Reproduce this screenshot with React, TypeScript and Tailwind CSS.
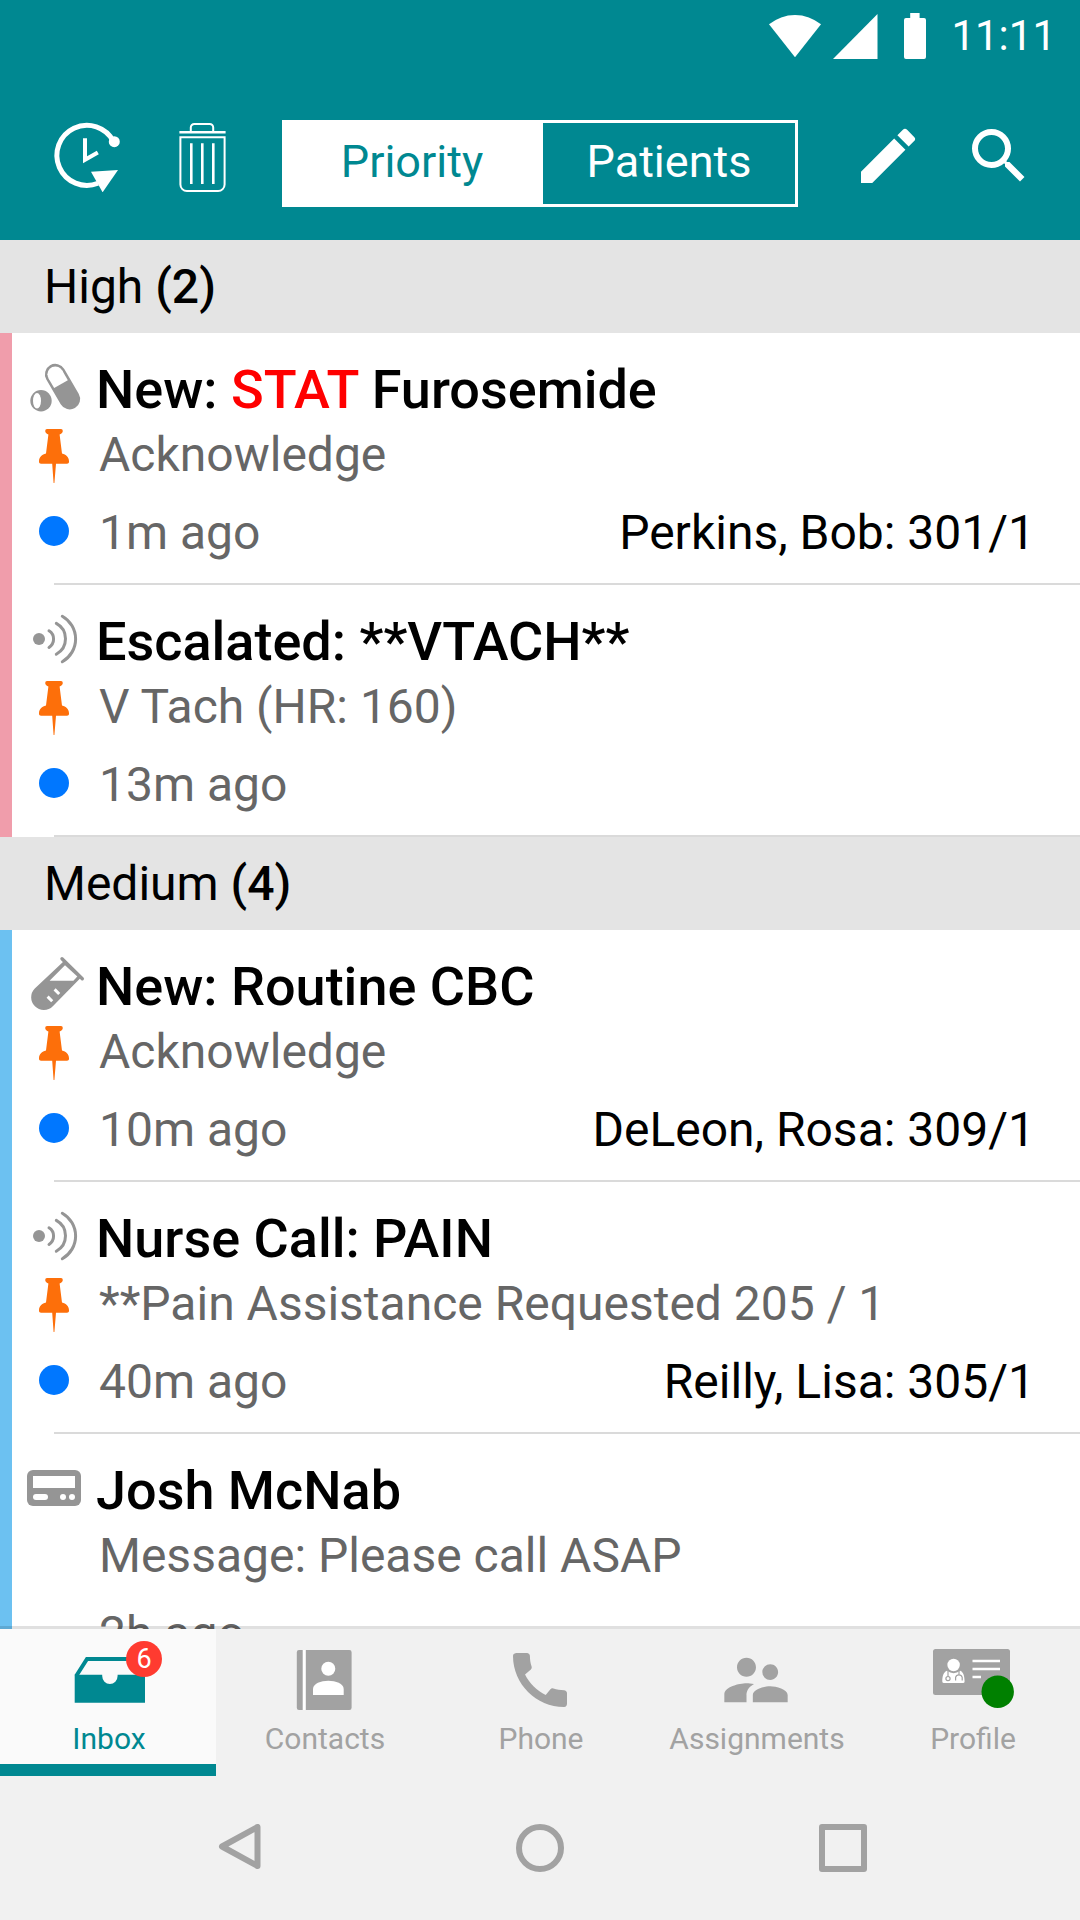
import { useState } from "react";
import type { ReactNode } from "react";
import { MdCall, MdEdit, MdSearch, MdSupervisorAccount } from "react-icons/md";

type IconName = "pills" | "alarm" | "lab" | "pager";

type Item = {
  id: number;
  icon: IconName;
  title: ReactNode;
  detail: string;
  time: string;
  patient?: string;
  pinned?: boolean;
  unread?: boolean;
};

type Group = {
  name: string;
  count: number;
  stripe: string;
  items: Item[];
};

const groups: Group[] = [
  {
    name: "High",
    count: 2,
    stripe: "bg-[#f09dab]",
    items: [
      {
        id: 1,
        icon: "pills",
        title: (
          <>
            New: <span className="text-[#ff0000]">STAT</span> Furosemide
          </>
        ),
        detail: "Acknowledge",
        time: "1m ago",
        patient: "Perkins, Bob: 301/1",
        pinned: true,
        unread: true,
      },
      {
        id: 2,
        icon: "alarm",
        title: "Escalated: **VTACH**",
        detail: "V Tach (HR: 160)",
        time: "13m ago",
        pinned: true,
        unread: true,
      },
    ],
  },
  {
    name: "Medium",
    count: 4,
    stripe: "bg-[#6cc1f1]",
    items: [
      {
        id: 3,
        icon: "lab",
        title: "New: Routine CBC",
        detail: "Acknowledge",
        time: "10m ago",
        patient: "DeLeon, Rosa: 309/1",
        pinned: true,
        unread: true,
      },
      {
        id: 4,
        icon: "alarm",
        title: "Nurse Call: PAIN",
        detail: "**Pain Assistance Requested 205 / 1",
        time: "40m ago",
        patient: "Reilly, Lisa: 305/1",
        pinned: true,
        unread: true,
      },
      {
        id: 5,
        icon: "pager",
        title: "Josh McNab",
        detail: "Message: Please call ASAP",
        time: "2h ago",
      },
    ],
  },
];

function StatusBar() {
  return (
    <div className="flex h-[72px] items-center justify-end pr-6 text-white">
      <svg width="52" height="48" viewBox="0 0 52 48" fill="currentColor">
        <path d="M0 12.3A41 41 0 0 1 52 12.3L26 45.3Z" />
      </svg>
      <svg className="ml-3" width="45" height="48" viewBox="0 0 45 48" fill="currentColor">
        <path d="M0 47H44.5V2Z" />
      </svg>
      <svg className="ml-[26px]" width="22" height="48" viewBox="0 0 22 48" fill="currentColor">
        <path d="M6.2 1H15.6V6H20a2 2 0 0 1 2 2V45a2 2 0 0 1-2 2H2a2 2 0 0 1-2-2V8a2 2 0 0 1 2-2H6.2Z" />
      </svg>
      <span className="ml-[25px] text-[42px] leading-[48px]">11:11</span>
    </div>
  );
}

function HistoryIcon() {
  return (
    <svg width="72" height="72" viewBox="-1 -1 72 72" fill="none" stroke="currentColor">
      <path d="M62.5 20.5A30 30 0 1 0 47 62.2" strokeWidth="5" />
      <circle cx="63.3" cy="20.7" r="5.5" fill="currentColor" stroke="none" />
      <path d="M40 50.7L67 49L51.6 71.3Z" fill="currentColor" stroke="none" />
      <path d="M34 17.3V38.8L46.8 31.5" strokeWidth="4" />
    </svg>
  );
}

function TrashIcon() {
  return (
    <svg width="48" height="72" viewBox="0 -1 48 72" fill="none" stroke="currentColor" strokeWidth="2">
      <path d="M12.8 10V6.5A3.5 3.5 0 0 1 16.3 3H31.7A3.5 3.5 0 0 1 35.2 6.5V10" />
      <path d="M1.4 11.2H47.6" strokeWidth="2.6" />
      <path d="M2.4 16.2H46.6V63.5A6.5 6.5 0 0 1 40.1 70H8.9A6.5 6.5 0 0 1 2.4 63.5Z" />
      <path d="M13.3 22.3V63M24.3 22.3V63M35.3 22.3V63" strokeWidth="2.6" />
    </svg>
  );
}

function ItemIcon({ name }: { name: IconName }) {
  return (
    <svg width="84" height="66" viewBox="0 0 84 66" className="text-[#959595]" fill="none" stroke="currentColor">
      {name === "pills" && (
        <>
          <path d="M43.3 19.3L57.7 44" strokeWidth="20.8" strokeLinecap="round" />
          <circle cx="43.3" cy="19.3" r="7.9" fill="white" stroke="none" />
          <path d="M43.3 19.3L49 29.1" stroke="white" strokeWidth="15.8" />
          <circle cx="29" cy="45.7" r="10.7" fill="currentColor" stroke="none" />
          <ellipse cx="25" cy="45.7" rx="4" ry="7.7" fill="white" stroke="none" />
        </>
      )}
      {name === "alarm" && (
        <>
          <circle cx="27" cy="32" r="6" fill="currentColor" stroke="none" />
          <path
            d="M37 23.8A9.8 9.8 0 0 1 37 40.4M44.3 16.4A17.5 17.5 0 0 1 44.3 47.2M50.3 9.2A26.1 26.1 0 0 1 50.3 54.7"
            strokeWidth="3"
            strokeLinecap="round"
          />
        </>
      )}
      {name === "lab" && (
        <>
          <path d="M50 6.7L70.3 26.7" strokeWidth="3.4" strokeLinecap="round" />
          <path
            d="M52 9L22.8 36.5A12.6 12.6 0 0 0 40.8 54.2L69 25.6Z"
            fill="currentColor"
            stroke="none"
          />
          <path d="M53 13.2L65.3 24.4L61.4 28.8H37.6Z" fill="white" stroke="none" />
          <path d="M42.6 37.4L47.2 42M35.6 44.6L40.2 49.2" stroke="white" strokeWidth="3" />
        </>
      )}
      {name === "pager" && (
        <>
          <rect x="15" y="14" width="54" height="36" rx="6" fill="currentColor" stroke="none" />
          <g fill="white" stroke="none">
            <rect x="21" y="20" width="42" height="12" />
            <rect x="21" y="38" width="15" height="6" rx="3" />
            <circle cx="51" cy="41" r="3" />
            <circle cx="60" cy="41" r="3" />
          </g>
        </>
      )}
    </svg>
  );
}

function PinIcon() {
  return (
    <svg className="mt-2" width="30" height="54" viewBox="0 0 30 54" fill="#fd6f0a">
      <path d="M8 0H22A2 2 0 0 1 23.8 2C23.8 4 22 5 20.6 5.6L23 24.6C27 25.6 30 28 30 32.5A2 2 0 0 1 28 34.7H17L15.4 54H14.6L13.2 34.7H2A2 2 0 0 1 0 32.5C0 28 3 25.6 7 24.6L9.4 5.6C8 5 6.2 4 6.2 2A2 2 0 0 1 8 0Z" />
    </svg>
  );
}

function InboxRow({ item, stripe }: { item: Item; stripe: string }) {
  return (
    <li className="flex bg-white">
      <div className={`w-3 shrink-0 ${stripe}`} />
      <div className="min-w-0 flex-1">
        <div className="flex">
          <div className="flex w-[84px] shrink-0 flex-col items-center pt-[22px]">
            <ItemIcon name={item.icon} />
            {item.pinned && <PinIcon />}
            {item.unread && (
              <span className="mt-[33px] size-[30px] rounded-full bg-[#0077ff]" />
            )}
          </div>
          <div className="min-w-0 flex-1 pt-6 pr-[45px] pb-[18px]">
            <h3 className="truncate text-[54px] leading-[66px] font-medium">{item.title}</h3>
            <p className="truncate pl-[3px] text-[48px] leading-[64px] text-[#666]">
              {item.detail}
            </p>
            <div className="mt-[14px] flex justify-between pl-[3px] text-[48px] leading-[64px]">
              <span className="text-[#666]">{item.time}</span>
              {item.patient && <span>{item.patient}</span>}
            </div>
          </div>
        </div>
        <div className="ml-[42px] h-[2px] bg-[#dadada]" />
      </div>
    </li>
  );
}

function InboxIcon() {
  return (
    <svg width="84" height="72" viewBox="0 0 84 72" fill="currentColor">
      <path
        d="M10.2 32L21 15H66.6L77.4 32"
        fill="none"
        stroke="currentColor"
        strokeWidth="4"
      />
      <path d="M8.7 30.7H36.2V32A7.7 8 0 0 0 51.6 32V30.7H79V58.7H8.7Z" />
    </svg>
  );
}

function ContactsIcon() {
  return (
    <svg width="84" height="72" viewBox="0 0 84 72" fill="currentColor">
      <rect x="20" y="6" width="5" height="60" fill="white" />
      <path d="M20.7 6V66H17A2.2 2.2 0 0 1 14.8 63.8V8.2A2.2 2.2 0 0 1 17 6Z" />
      <path d="M23.8 6H67.4A2.2 2.2 0 0 1 69.6 8.2V63.8A2.2 2.2 0 0 1 67.4 66H23.8Z" />
      <circle cx="46.3" cy="24.8" r="7" fill="white" />
      <path d="M31 51V45C31 39.5 39 36.7 46.3 36.7S61.7 39.5 61.7 45V51Z" fill="white" />
    </svg>
  );
}

function ProfileIcon() {
  return (
    <svg width="84" height="72" viewBox="0 0 84 72" fill="currentColor" className="overflow-visible">
      <rect x="3" y="5" width="77" height="46" rx="2.5" />
      <g fill="white">
        <circle cx="23.6" cy="21" r="6.2" />
        <path d="M17 26.8Q23.6 31.5 30.2 26.8C33.4 28 34.6 32 34.6 37.5Q34.6 39 33 39H14Q12.3 39 12.3 37.5C12.3 32 13.6 28 17 26.8Z" />
      </g>
      <g fill="none" stroke="currentColor" strokeWidth="1.2">
        <path d="M18 27V32.5M29 27V30.2M25.6 36.6V33.4A3.4 3.4 0 0 1 32.2 33.4V36.6" />
        <circle cx="18" cy="34.6" r="2.1" />
      </g>
      <path d="M42.5 17H70M42.5 25H70M42.5 33H51" fill="none" stroke="white" strokeWidth="2.4" />
      <circle cx="67.7" cy="47.8" r="16.2" fill="#008000" />
    </svg>
  );
}

const tabs = [
  { id: "inbox", label: "Inbox", icon: <InboxIcon />, badge: 6 },
  { id: "contacts", label: "Contacts", icon: <ContactsIcon /> },
  { id: "phone", label: "Phone", icon: <MdCall size={72} /> },
  { id: "assignments", label: "Assignments", icon: <MdSupervisorAccount size={76} /> },
  { id: "profile", label: "Profile", icon: <ProfileIcon /> },
];

export default function App() {
  const [view, setView] = useState("Priority");
  const [activeTab, setActiveTab] = useState("inbox");

  return (
    <div className="flex h-screen flex-col bg-white font-[Roboto,sans-serif] text-black">
      <header className="bg-[#008891] text-white">
        <StatusBar />
        <div className="flex items-start pt-12 pr-[45px] pb-[33px] pl-[50px]">
          <button aria-label="History">
            <HistoryIcon />
          </button>
          <button aria-label="Delete" className="ml-14">
            <TrashIcon />
          </button>
          <div className="mr-[54px] ml-14 grid flex-1 grid-cols-[43fr_42fr] border-[3px] border-white">
            {["Priority", "Patients"].map((name) => (
              <button
                key={name}
                onClick={() => setView(name)}
                aria-pressed={view === name}
                className={`h-[81px] pb-1 text-[45px] leading-[54px] ${
                  view === name ? "bg-white pr-1 text-[#008891]" : "text-white"
                }`}
              >
                {name}
              </button>
            ))}
          </div>
          <button aria-label="Compose">
            <MdEdit size={72} />
          </button>
          <button aria-label="Search" className="ml-[39px]">
            <MdSearch size={72} />
          </button>
        </div>
      </header>

      <main className="min-h-0 flex-1 overflow-hidden">
        {groups.map((group) => (
          <section key={group.name}>
            <h2 className="bg-[#e4e4e4] px-11 text-[48px] leading-[93px]">
              {group.name} <span className="font-medium">({group.count})</span>
            </h2>
            <ul>
              {group.items.map((item) => (
                <InboxRow key={item.id} item={item} stripe={group.stripe} />
              ))}
            </ul>
          </section>
        ))}
      </main>

      <footer className="relative bg-[#f1f1f1] text-[#a2a2a2] shadow-[0_-3px_0_rgba(0,0,0,0.12)]">
        <nav className="grid grid-cols-5">
          {tabs.map((tab) => (
            <a
              key={tab.id}
              href={`#${tab.id}`}
              onClick={() => setActiveTab(tab.id)}
              className={`flex flex-col items-center border-b-[12px] pt-[15px] pb-[7px] ${
                activeTab === tab.id
                  ? "border-[#008891] bg-[#fafafa] text-[#008891]"
                  : "border-transparent"
              }`}
            >
              <span className="relative flex h-[72px] items-center">
                {tab.icon}
                {tab.badge && (
                  <span className="absolute -top-[3px] -right-3 size-9 rounded-full bg-[#ff3b30] text-center text-[27px] leading-9 text-white">
                    {tab.badge}
                  </span>
                )}
              </span>
              <span className="mt-[5px] pl-[2px] text-[30px] leading-9">{tab.label}</span>
            </a>
          ))}
        </nav>
        <div className="flex h-36 items-center justify-center gap-[255px]">
          <button aria-label="Back">
            <svg width="48" height="48" viewBox="0 0 48 48" fill="none" stroke="currentColor" strokeWidth="6" strokeLinejoin="round">
              <path d="M44.5 3V42L9 22.5Z" />
            </svg>
          </button>
          <button aria-label="Home">
            <svg width="48" height="48" viewBox="0 0 48 48" fill="none" stroke="currentColor" strokeWidth="6">
              <circle cx="24" cy="24" r="21" />
            </svg>
          </button>
          <button aria-label="Recent apps">
            <svg width="48" height="48" viewBox="0 0 48 48" fill="none" stroke="currentColor" strokeWidth="6" strokeLinejoin="round">
              <rect x="3" y="3" width="42" height="42" />
            </svg>
          </button>
        </div>
      </footer>
    </div>
  );
}
